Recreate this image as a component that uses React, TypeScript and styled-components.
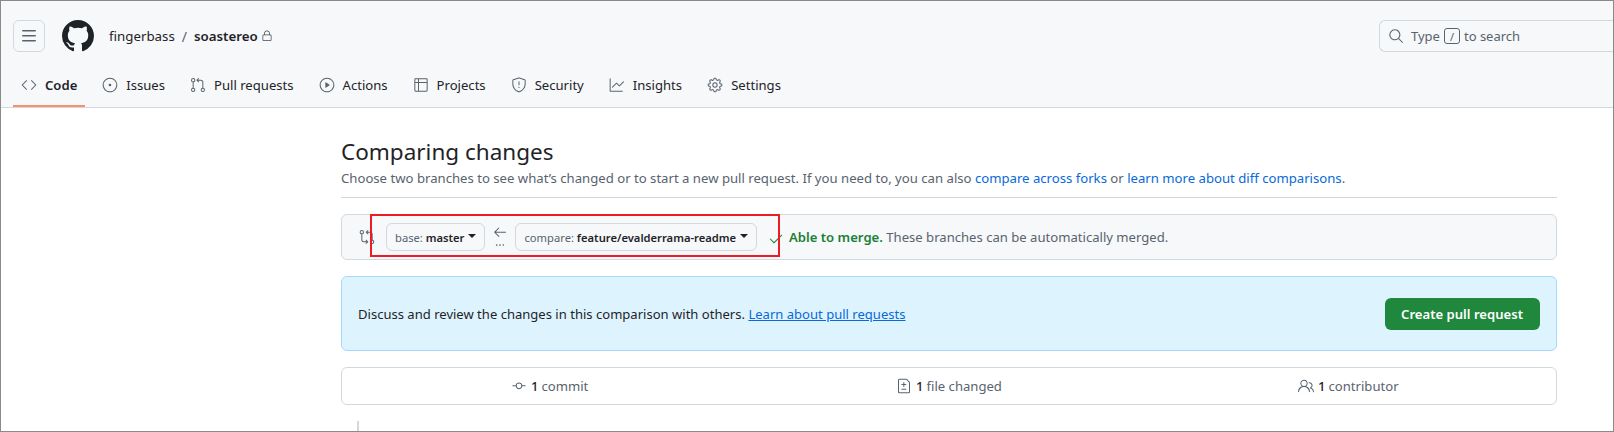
import styled, { createGlobalStyle } from 'styled-components';
import {
    GoCheck,
    GoCode,
    GoFileDiff,
    GoGear,
    GoGitCommit,
    GoGitCompare,
    GoGitPullRequest,
    GoGraph,
    GoIssueOpened,
    GoKebabHorizontal,
    GoLock,
    GoArrowLeft,
    GoPeople,
    GoPlay,
    GoSearch,
    GoShield,
    GoTable,
} from 'react-icons/go';

const GlobalStyle = createGlobalStyle`
    html, body {
        margin: 0;
        padding: 0;
        background: #ffffff;
    }
    body {
        font-family: "Noto Sans", "Open Sans", sans-serif;
        font-size: 14px;
        color: #1f2328;
    }
`;

const Frame = styled.div`
    width: 1614px;
    height: 432px;
    box-sizing: border-box;
    border: 1px solid #8a8a8a;
    overflow: hidden;
    background: #ffffff;
`;

const Header = styled.header`
    height: 107px;
    box-sizing: border-box;
    background: #f6f8fa;
    border-bottom: 1px solid #d1d9e0;
    padding: 19px 0 0 12px;
`;

const TopRow = styled.div`
    display: flex;
    align-items: center;
    height: 32px;
`;

const MenuButton = styled.div`
    width: 32px;
    height: 32px;
    box-sizing: border-box;
    border: 1px solid #d1d9e0;
    border-radius: 6px;
    display: flex;
    align-items: center;
    justify-content: center;
    color: #59636e;
`;

const LogoMark = styled.svg`
    margin-left: 17px;
    width: 32px;
    height: 32px;
    fill: #1f2328;
`;

const Owner = styled.span`
    margin-left: 15px;
    font-size: 13.3px;
    color: #1f2328;
`;

const Slash = styled.span`
    margin: 0 7px;
    color: #59636e;
    font-size: 14px;
`;

const RepoName = styled.span`
    font-size: 13.3px;
    font-weight: 600;
    color: #1f2328;
`;

const RepoLock = styled(GoLock)`
    margin-left: 3px;
    color: #424a53;
`;

const SearchBox = styled.div`
    margin-left: auto;
    width: 234px;
    height: 32px;
    box-sizing: border-box;
    border: 1px solid #d1d9e0;
    border-right: none;
    border-radius: 6px 0 0 6px;
    display: flex;
    align-items: center;
    padding-left: 8px;
    color: #59636e;
    font-size: 13px;
    gap: 7px;
`;

const SearchText = styled.span`
    display: flex;
    align-items: center;
    gap: 4px;
`;

const SlashKey = styled.kbd`
    width: 16px;
    height: 16px;
    box-sizing: border-box;
    border: 1px solid #59636e;
    border-radius: 3px;
    font-family: "Noto Sans", sans-serif;
    font-size: 11px;
    display: flex;
    align-items: center;
    justify-content: center;
`;

const TabRow = styled.nav`
    display: flex;
    margin-top: 13px;
    height: 42px;
`;

const Tab = styled.div<{ $active?: boolean }>`
    display: flex;
    align-items: center;
    gap: 8px;
    height: 42px;
    box-sizing: border-box;
    padding: 0 8px;
    margin-right: 9px;
    font-size: 13.1px;
    font-weight: ${(p) => (p.$active ? 600 : 400)};
    color: #1f2328;
    border-bottom: 2px solid ${(p) => (p.$active ? '#fd8c73' : 'transparent')};
    svg {
        color: #59636e;
    }
`;

const Main = styled.main`
    position: relative;
    width: 1216px;
    margin-left: 340px;
    padding-top: 28px;
`;

const Title = styled.h1`
    margin: 0;
    font-size: 22.5px;
    line-height: 32px;
    font-weight: 400;
    color: #1f2328;
`;

const Description = styled.p`
    margin: 0;
    padding-bottom: 9px;
    font-size: 13.15px;
    line-height: 20px;
    color: #59636e;
    border-bottom: 1px solid #d1d9e0;
`;

const Link = styled.a`
    color: #0969da;
`;

const RangeBar = styled.div`
    margin-top: 16px;
    height: 46px;
    box-sizing: border-box;
    background: #f6f8fa;
    border: 1px solid #d1d9e0;
    border-radius: 6px;
    display: flex;
    align-items: center;
    padding-left: 17px;
    color: #59636e;
`;

const BaseGap = styled.span`
    width: 11px;
`;

const BranchButton = styled.div`
    height: 28px;
    box-sizing: border-box;
    padding: 0 8px;
    border: 1px solid #d1d9e0;
    border-radius: 6px;
    display: flex;
    align-items: center;
    font-size: 11.2px;
    color: #59636e;
    white-space: pre;
`;

const BranchName = styled.span`
    font-weight: 600;
    color: #1f2328;
`;

const Caret = styled.span`
    margin-left: 4px;
    margin-bottom: 3px;
    border-top: 4px solid #1f2328;
    border-left: 4px solid transparent;
    border-right: 4px solid transparent;
`;

const ArrowStack = styled.div`
    width: 30px;
    display: flex;
    flex-direction: column;
    align-items: center;
    color: #59636e;
`;

const MergeNote = styled.span`
    margin-left: 11px;
    display: flex;
    align-items: center;
    gap: 5px;
    font-size: 13.1px;
    white-space: pre;
    svg {
        color: #1a7f37;
        margin-top: 3px;
    }
`;

const MergeStrong = styled.strong`
    font-weight: 600;
    color: #1a7f37;
`;

const Highlight = styled.div`
    position: absolute;
    left: 29px;
    top: 106px;
    width: 410px;
    height: 43px;
    box-sizing: border-box;
    border: 2px solid #ed1c24;
`;

const Blankslate = styled.div`
    margin-top: 16px;
    height: 75px;
    box-sizing: border-box;
    background: #ddf4ff;
    border: 1px solid #a5d8ff;
    border-radius: 6px;
    display: flex;
    align-items: center;
    justify-content: space-between;
    padding: 0 16px;
    font-size: 13.06px;
    color: #1f2328;
`;

const UnderlinedLink = styled(Link)`
    text-decoration: underline;
`;

const PrimaryButton = styled.div`
    height: 32px;
    box-sizing: border-box;
    padding: 0 17px 0 16px;
    background: #1f883d;
    border-radius: 6px;
    color: #ffffff;
    font-size: 13.1px;
    font-weight: 600;
    display: flex;
    align-items: center;
`;

const Stats = styled.div`
    margin-top: 16px;
    height: 38px;
    box-sizing: border-box;
    border: 1px solid #d1d9e0;
    border-radius: 6px;
    padding: 0 8px;
    display: grid;
    grid-template-columns: repeat(3, 1fr);
`;

const Stat = styled.div`
    display: flex;
    align-items: center;
    justify-content: center;
    gap: 4px;
    font-size: 13.1px;
    color: #59636e;
`;

const StatCount = styled.span`
    font-weight: 500;
    color: #1f2328;
    margin-right: -1px;
`;

const Timeline = styled.div`
    margin: 16px 0 0 16px;
    width: 2px;
    height: 12px;
    background: #d1d9e0;
`;

const ThreeBars = () => (
    <svg width="16" height="16" viewBox="0 0 16 16" fill="currentColor">
        <path d="M1 2.75A.75.75 0 0 1 1.75 2h12.5a.75.75 0 0 1 0 1.5H1.75A.75.75 0 0 1 1 2.75Zm0 5A.75.75 0 0 1 1.75 7h12.5a.75.75 0 0 1 0 1.5H1.75A.75.75 0 0 1 1 7.75ZM1.75 12h12.5a.75.75 0 0 1 0 1.5H1.75a.75.75 0 0 1 0-1.5Z" />
    </svg>
);

const tabs = [
    { label: 'Code', icon: GoCode, active: true },
    { label: 'Issues', icon: GoIssueOpened },
    { label: 'Pull requests', icon: GoGitPullRequest },
    { label: 'Actions', icon: GoPlay },
    { label: 'Projects', icon: GoTable },
    { label: 'Security', icon: GoShield },
    { label: 'Insights', icon: GoGraph },
    { label: 'Settings', icon: GoGear },
];

const App = () => {
    return (
        <>
            <GlobalStyle />
            <Frame>
                <Header>
                    <TopRow>
                        <MenuButton>
                            <ThreeBars />
                        </MenuButton>
                        <LogoMark viewBox="0 0 16 16">
                            <path d="M8 0c4.42 0 8 3.58 8 8a8.013 8.013 0 0 1-5.45 7.59c-.4.08-.55-.17-.55-.38 0-.27.01-1.13.01-2.2 0-.75-.25-1.23-.54-1.48 1.78-.2 3.65-.88 3.65-3.95 0-.88-.31-1.59-.82-2.15.08-.2.36-1.02-.08-2.12 0 0-.67-.22-2.2.82-.64-.18-1.32-.27-2-.27-.68 0-1.36.09-2 .27-1.53-1.03-2.2-.82-2.2-.82-.44 1.1-.16 1.92-.08 2.12-.51.56-.82 1.28-.82 2.15 0 3.06 1.86 3.75 3.64 3.95-.23.2-.44.55-.51 1.07-.46.21-1.61.55-2.33-.66-.15-.24-.6-.83-1.23-.82-.67.01-.27.38.01.53.34.19.73.9.82 1.13.16.45.68 1.31 2.69.94 0 .67.01 1.3.01 1.49 0 .21-.15.45-.55.38A7.995 7.995 0 0 1 0 8c0-4.42 3.58-8 8-8Z" />
                        </LogoMark>
                        <Owner>fingerbass</Owner>
                        <Slash>/</Slash>
                        <RepoName>soastereo</RepoName>
                        <RepoLock size={12} />
                        <SearchBox>
                            <GoSearch size={16} />
                            <SearchText>
                                Type <SlashKey>/</SlashKey> to search
                            </SearchText>
                        </SearchBox>
                    </TopRow>
                    <TabRow>
                        {tabs.map((tab) => (
                            <Tab key={tab.label} $active={tab.active}>
                                <tab.icon size={16} />
                                {tab.label}
                            </Tab>
                        ))}
                    </TabRow>
                </Header>
                <Main>
                    <Title>Comparing changes</Title>
                    <Description>
                        Choose two branches to see what’s changed or to start a new pull request. If you need to, you can also{' '}
                        <Link>compare across forks</Link> or <Link>learn more about diff comparisons</Link>.
                    </Description>
                    <RangeBar>
                        <GoGitCompare size={16} />
                        <BaseGap />
                        <BranchButton>
                            base: <BranchName>master</BranchName>
                            <Caret />
                        </BranchButton>
                        <ArrowStack>
                            <GoArrowLeft size={16} />
                            <GoKebabHorizontal size={10} />
                        </ArrowStack>
                        <BranchButton>
                            compare: <BranchName>feature/evalderrama-readme</BranchName>
                            <Caret />
                        </BranchButton>
                        <MergeNote>
                            <GoCheck size={16} />
                            <span>
                                <MergeStrong>Able to merge.</MergeStrong> These branches can be automatically merged.
                            </span>
                        </MergeNote>
                    </RangeBar>
                    <Highlight />
                    <Blankslate>
                        <span>
                            Discuss and review the changes in this comparison with others.{' '}
                            <UnderlinedLink>Learn about pull requests</UnderlinedLink>
                        </span>
                        <PrimaryButton>Create pull request</PrimaryButton>
                    </Blankslate>
                    <Stats>
                        <Stat>
                            <GoGitCommit size={16} />
                            <StatCount>1</StatCount> commit
                        </Stat>
                        <Stat>
                            <GoFileDiff size={16} />
                            <StatCount>1</StatCount> file changed
                        </Stat>
                        <Stat>
                            <GoPeople size={16} />
                            <StatCount>1</StatCount> contributor
                        </Stat>
                    </Stats>
                    <Timeline />
                </Main>
            </Frame>
        </>
    );
};

export default App;
